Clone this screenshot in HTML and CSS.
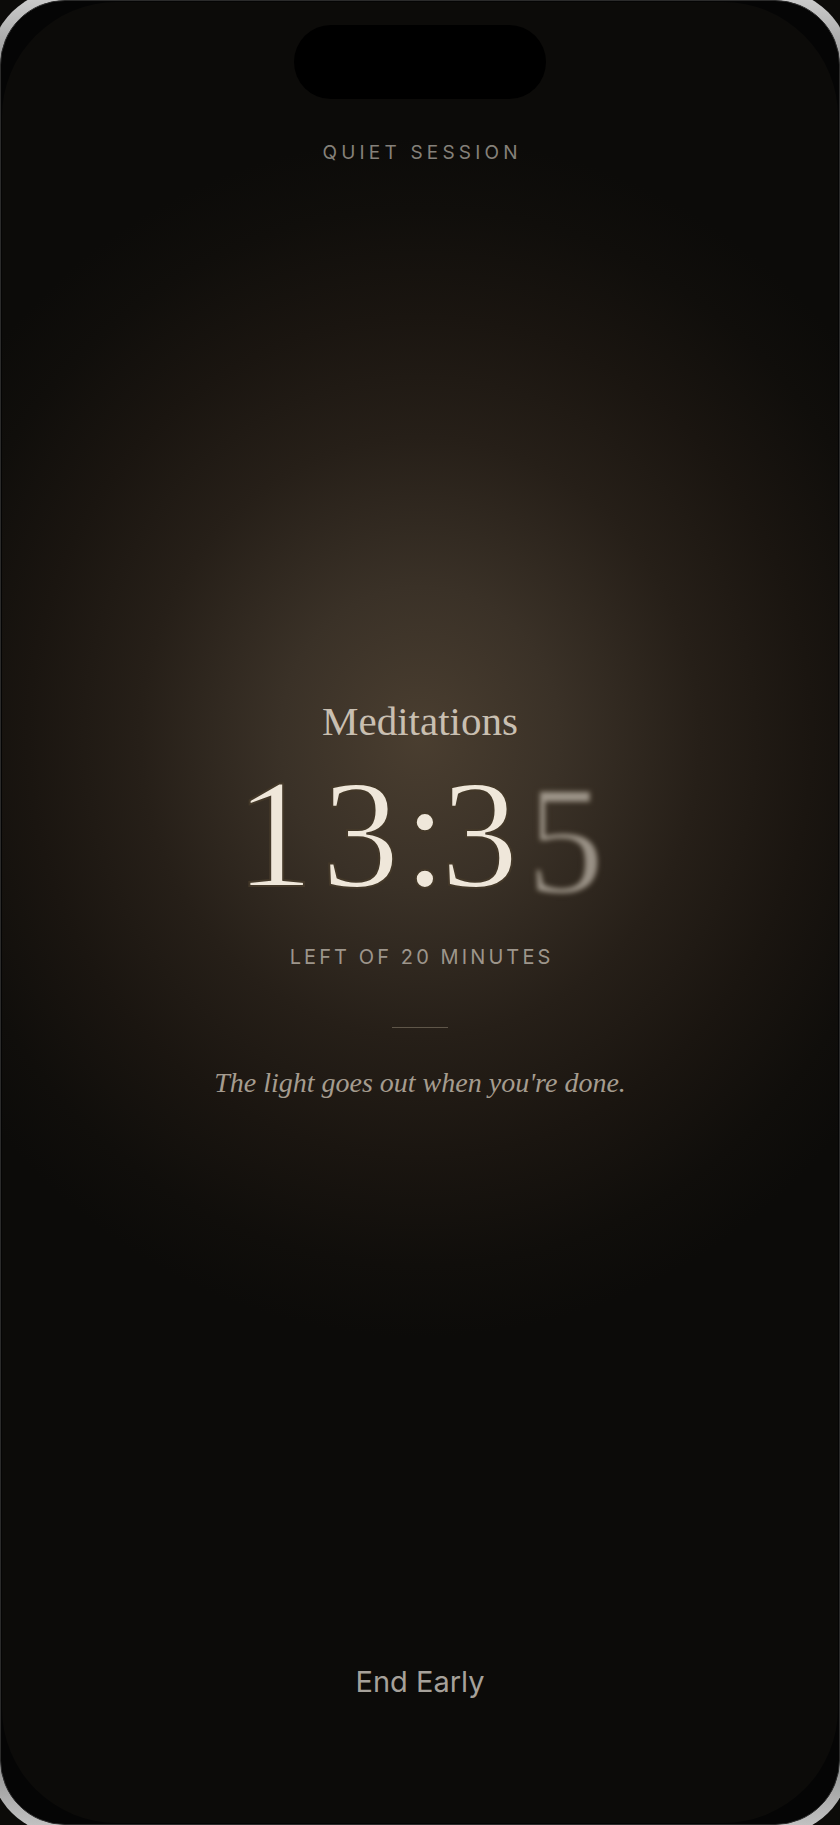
FILE: index.html
```html
<!DOCTYPE html>
<html lang="en">
<head>
<meta charset="utf-8">
<title>Quiet Session</title>
<link rel="stylesheet" href="styles.css">
</head>
<body>
<div class="frame">
  <div class="bezel">
    <main class="screen">
      <div class="island"></div>
      <div class="eyebrow">QUIET SESSION</div>
      <h1 class="title">Meditations</h1>
      <div class="timer">
        <span class="digit">1</span><span class="digit">3</span><span class="colon">:</span><span class="digit">3</span><span class="digit next">5</span>
      </div>
      <div class="caption">LEFT OF 20 MINUTES</div>
      <div class="rule"></div>
      <p class="quote">The light goes out when you're done.</p>
      <button class="end">End Early</button>
    </main>
  </div>
</div>
</body>
</html>
```

FILE: styles.css
```css
html, body {
  margin: 0;
  padding: 0;
  overflow: hidden;
  background: #0c0b09;
}

.frame {
  margin: -10px;
  width: calc(100% + 20px);
  height: 1845px;
  padding: 10px;
  box-sizing: border-box;
  border-radius: 75px;
  background: linear-gradient(180deg, #d2d2d2 0%, #a8a8a8 3%, #5a5a5a 8%, #4a4a4a 92%, #a0a0a0 97%, #c8c8c8 100%);
}

.bezel {
  height: 100%;
  box-sizing: border-box;
  border: 1px solid #2b2b2b;
  padding: 1px;
  border-radius: 65px;
  background: #050505;
}

.screen {
  height: 100%;
  box-sizing: border-box;
  border-radius: 115px;
  overflow: hidden;
  display: flex;
  flex-direction: column;
  align-items: center;
  background:
    radial-gradient(ellipse 560px 600px at 50% 735px,
      #4a3e30 0%,
      #3a3127 25%,
      #261f18 50%,
      #1a1510 70%,
      #100e0b 88%,
      #0c0b09 100%);
}

.island {
  margin-top: 23px;
  width: 252px;
  height: 74px;
  border-radius: 37px;
  background: #000;
  flex: none;
}

.eyebrow {
  margin-top: 44px;
  font-family: Inter, "Liberation Sans", sans-serif;
  font-size: 19px;
  line-height: 19px;
  letter-spacing: 0.22em;
  margin-right: -0.22em;
  color: #85817a;
}

.title {
  margin: 539px 0 0;
  font-family: "Liberation Serif", serif;
  font-weight: 400;
  font-size: 41px;
  line-height: 41px;
  color: #c9bfb1;
}

.timer {
  margin-top: 15px;
  display: flex;
  font-family: "Liberation Serif", serif;
  font-size: 155px;
  line-height: 155px;
  height: 155px;
  color: #efe7da;
}

.digit,
.colon {
  -webkit-text-stroke: 2px #433829;
}

.digit {
  width: 86px;
  text-align: center;
}

.colon {
  width: 33px;
  text-align: center;
}

.next {
  opacity: 0.55;
  filter: blur(2.5px);
  transform: translateY(6px);
}

.caption {
  margin-top: 35px;
  font-family: Inter, "Liberation Sans", sans-serif;
  font-size: 20px;
  line-height: 20px;
  letter-spacing: 0.155em;
  margin-right: -0.155em;
  color: #9d958b;
}

.rule {
  margin-top: 60px;
  width: 56px;
  height: 1px;
  background: #5f5649;
  flex: none;
}

.quote {
  margin: 41px 0 0;
  font-family: "Liberation Serif", serif;
  font-style: italic;
  font-size: 28px;
  line-height: 28px;
  color: #a59c8f;
}

.end {
  margin-top: 570px;
  padding: 0;
  border: 0;
  background: none;
  font-family: Inter, "Liberation Sans", sans-serif;
  font-size: 29px;
  line-height: 29px;
  color: #a6a19a;
}
```
